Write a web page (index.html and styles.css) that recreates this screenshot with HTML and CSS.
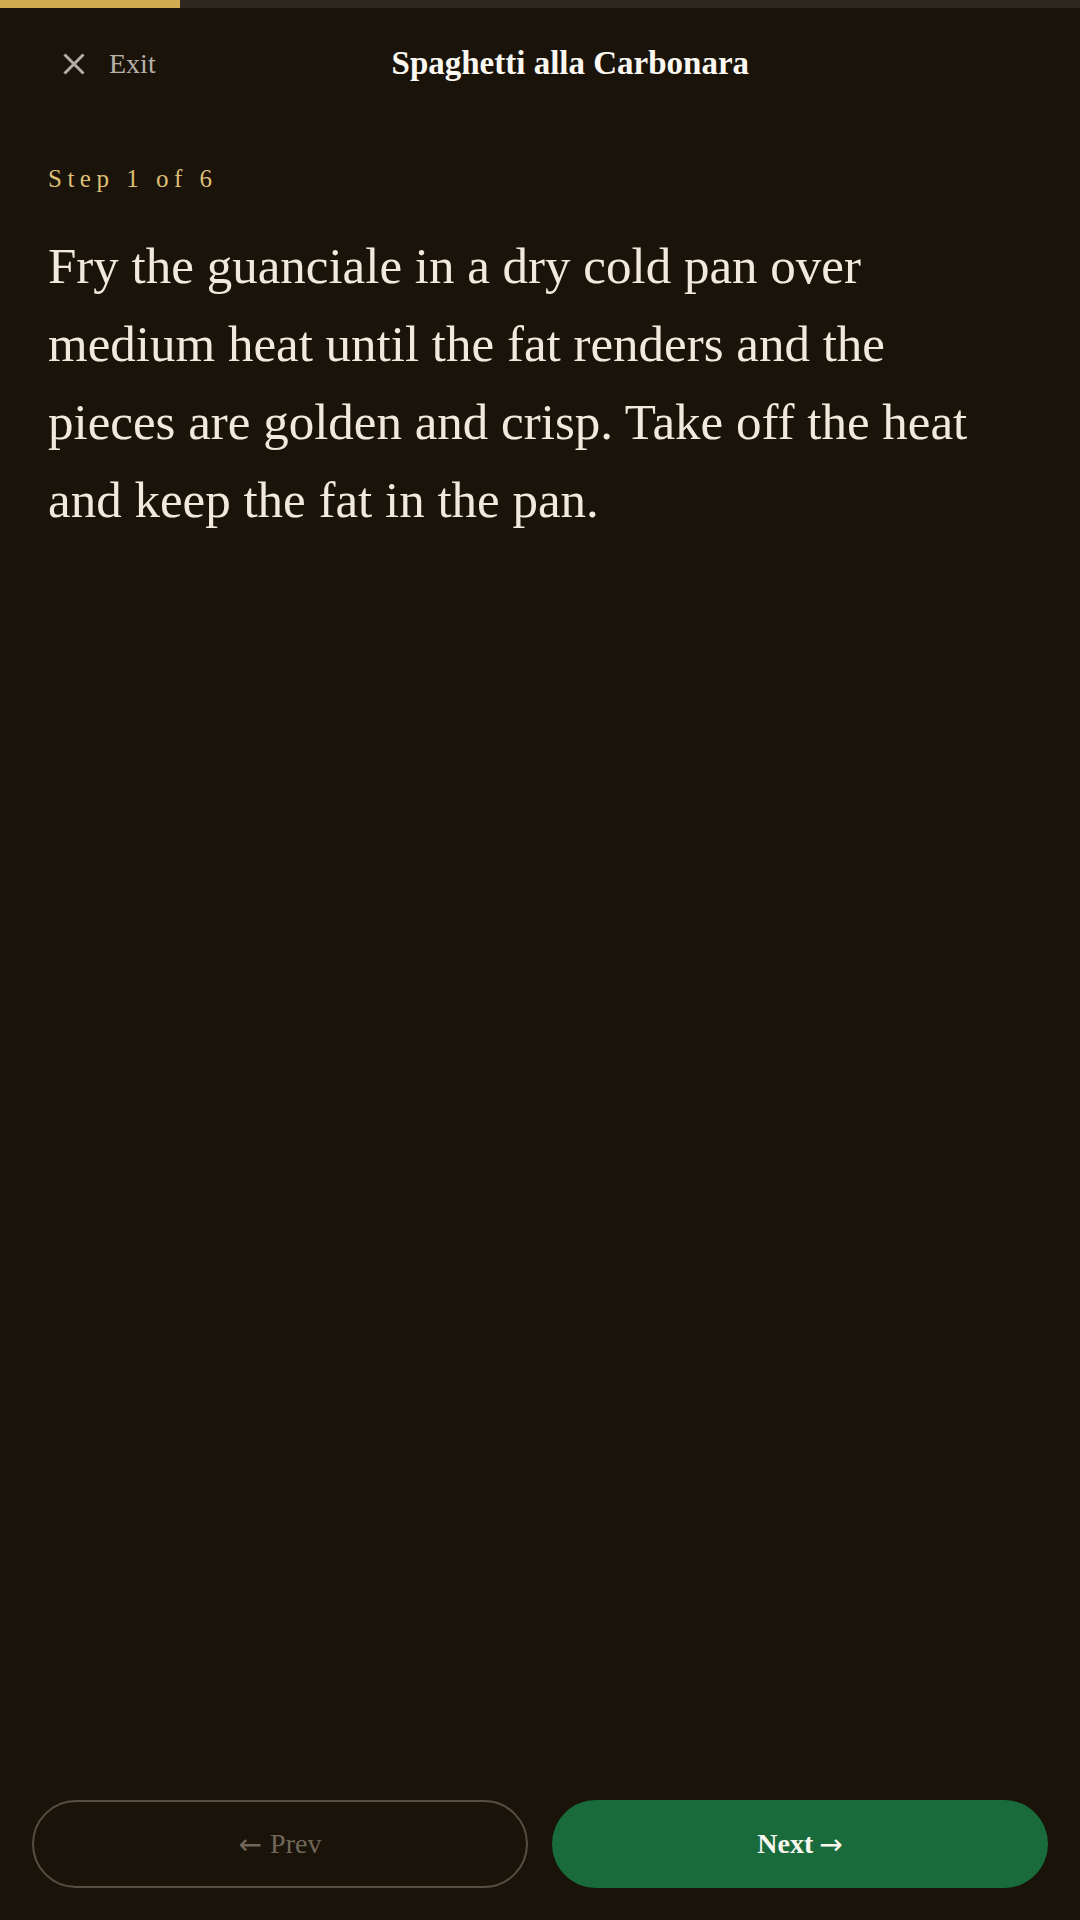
FILE: index.html
```html
<!DOCTYPE html>
<html lang="en">
<head>
<meta charset="utf-8">
<title>Spaghetti alla Carbonara — Cook mode</title>
<link rel="stylesheet" href="styles.css">
</head>
<body>
<div class="screen">
  <div class="progress"><div class="progress-fill" style="width: 16.6667%"></div></div>
  <header class="topbar">
    <button class="exit" type="button">
      <svg class="exit-icon" viewBox="0 0 22 22" width="22" height="22" aria-hidden="true">
        <path d="M1.5 1.5 L20.5 20.5 M20.5 1.5 L1.5 20.5" fill="none" stroke="currentColor" stroke-width="3" stroke-linecap="butt"/>
      </svg>
      <span>Exit</span>
    </button>
    <h1 class="title">Spaghetti alla Carbonara</h1>
    <div class="spacer"></div>
  </header>
  <main class="step">
    <p class="step-label">Step 1 of 6</p>
    <p class="step-text">Fry the guanciale in a dry cold pan over medium heat until the fat renders and the pieces are golden and crisp. Take off the heat and keep the fat in the pan.</p>
  </main>
  <footer class="nav">
    <button class="btn btn-prev" type="button" disabled><span class="arrow">←</span>Prev</button>
    <button class="btn btn-next" type="button">Next<span class="arrow arrow-right">→</span></button>
  </footer>
</div>
</body>
</html>
```

FILE: styles.css
```css
* { box-sizing: border-box; }

html, body {
  margin: 0;
  padding: 0;
  background: #1a130a;
}

body {
  font-family: "Liberation Serif", "DejaVu Serif", serif;
  color: #efe7da;
}

.screen {
  width: 1080px;
  height: 1920px;
  display: flex;
  flex-direction: column;
  background: #1a130a;
}

.progress {
  height: 8px;
  background: #2f2820;
  flex: none;
}

.progress-fill {
  height: 100%;
  background: #d1ab4f;
}

.topbar {
  height: 112px;
  flex: none;
  display: flex;
  align-items: center;
  padding: 0 48px;
}

.exit {
  display: flex;
  align-items: center;
  gap: 24px;
  padding: 0 0 0 15px;
  margin: 0;
  border: 0;
  background: transparent;
  color: #b7b0a7;
  font-family: "Liberation Serif", serif;
  font-size: 28px;
  line-height: 1.2;
  cursor: pointer;
}

.exit-icon {
  display: block;
  width: 22px;
  height: 22px;
  color: #b3ada5;
}

.title {
  flex: 1;
  margin: 0;
  text-align: center;
  font-family: "Liberation Serif", serif;
  font-weight: 700;
  font-size: 33px;
  line-height: 1.2;
  color: #fbf8f2;
}

.spacer {
  width: 47px;
  flex: none;
}

.step {
  flex: 1;
  padding: 44px 48px 0;
}

.step-label {
  margin: 0;
  font-size: 25px;
  line-height: 1.2;
  letter-spacing: 5.5px;
  color: #dfbf74;
}

.step-text {
  margin: 33px 0 0;
  max-width: 950px;
  font-size: 51px;
  line-height: 78px;
  color: #f1e9dc;
}

.nav {
  flex: none;
  display: grid;
  grid-template-columns: 1fr 1fr;
  gap: 24px;
  padding: 0 32px 32px;
}

.btn {
  height: 88px;
  border-radius: 44px;
  font-family: "Liberation Serif", serif;
  font-size: 28px;
  display: flex;
  align-items: center;
  justify-content: center;
  margin: 0;
}

.arrow {
  font-family: "DejaVu Sans", sans-serif;
  font-weight: 400;
  font-size: 28px;
  margin-right: 8px;
}

.arrow-right {
  margin-right: 0;
  margin-left: 6px;
}

.btn-prev {
  background: transparent;
  border: 2px solid #574d43;
  color: #716759;
  font-weight: 400;
}

.btn-next {
  background: #1a6b3c;
  border: 0;
  color: #fbf8f2;
  font-weight: 700;
}
```
